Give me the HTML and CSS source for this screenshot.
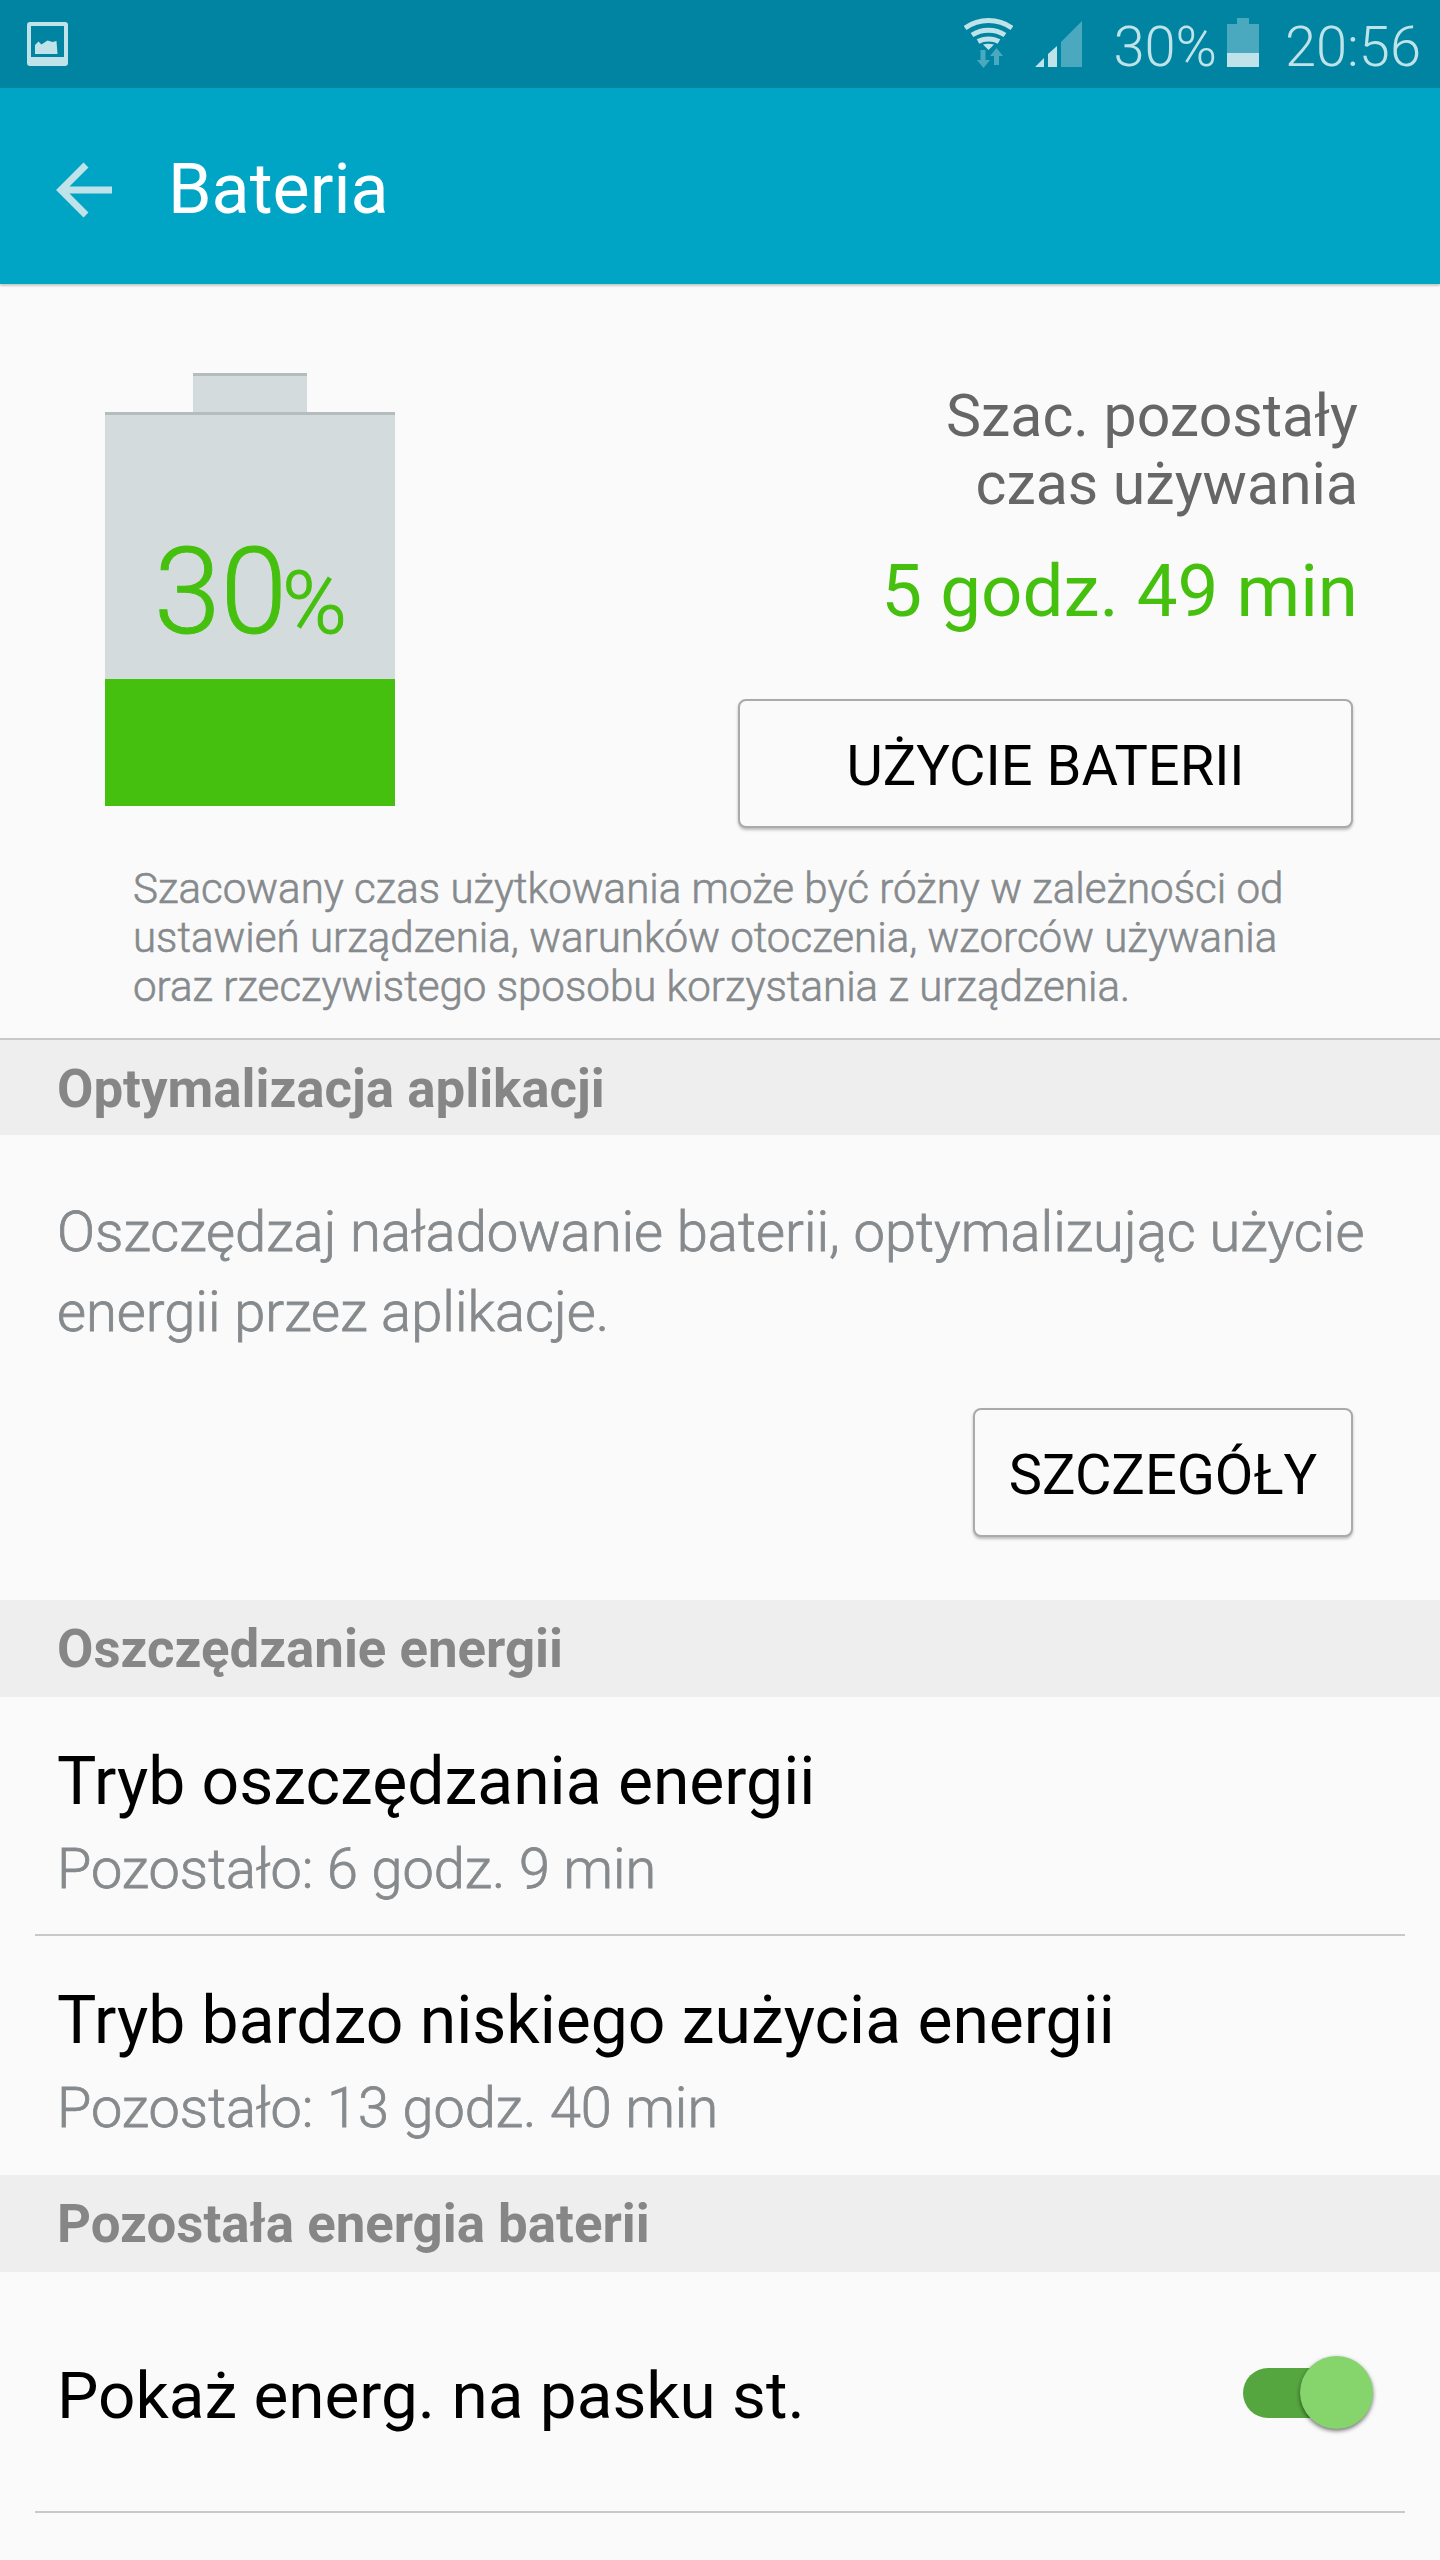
FILE: index.html
```html
<!DOCTYPE html>
<html lang="pl">
<head>
  <meta charset="UTF-8" />
  <title>Bateria</title>
  <link rel="stylesheet" href="styles.css">
</head>
<body>
  <div class="phone">
    <div class="status-bar">
      <svg class="status-photo" width="41" height="44" viewBox="0 0 41 44">
        <path fill="#bfe3e8" fill-rule="evenodd" d="M3 0h35a3 3 0 0 1 3 3v38a3 3 0 0 1-3 3H3a3 3 0 0 1-3-3V3a3 3 0 0 1 3-3zM4 4v31h33V4zM8 32V23l3.500-3.500 3 3 6-4 5 1.500 4-1 1 13z"/>
      </svg>
      <div class="status-right">
        <svg class="status-wifi" width="49" height="51" viewBox="0 0 49 51">
          <path fill="none" stroke="#bfe3e8" stroke-width="5" d="M1 11c14-10 33-10 47 0M8 18c10-6.500 23-6.500 33 0M14 24.500c6-3.500 15-3.500 21 0"/>
          <path fill="#bfe3e8" d="M19 27.500c3-1 7-1 11 0l-5.500 5.500z"/>
          <path fill="#4ba9bf" d="M16.500 33h5v10H26l-6.500 8L13 43h3.500zM32.500 31l6.500 8h-4v9h-5v-9h-4z"/>
        </svg>
        <svg class="status-signal" width="47" height="46" viewBox="0 0 47 46">
          <path fill="#bfe3e8" d="M0 46 9 37v9zM13 46V33l9-8v21z"/>
          <path fill="#4ba9bf" d="M26 46V21L47 0v46z"/>
        </svg>
        <span class="status-pct">30%</span>
        <div class="status-batt">
          <div class="status-batt-nub"></div>
          <div class="status-batt-body"><div class="status-batt-fill"></div></div>
        </div>
        <span class="status-time">20:56</span>
      </div>
    </div>

    <div class="app-bar">
      <svg class="back-icon" width="56" height="56" viewBox="0 0 56 56">
        <path fill="none" stroke="#bfe3e8" stroke-width="7" d="M56 28H5M30 3 5 28l25 25"/>
      </svg>
      <span class="app-title">Bateria</span>
    </div>

    <div class="battery-panel">
      <div class="battery-top">
        <div class="battery-big">
          <div class="battery-nub"></div>
          <div class="battery-body">
            <div class="battery-level"><span class="battery-num">30</span><span class="battery-sign">%</span></div>
            <div class="battery-fill"></div>
          </div>
        </div>
        <div class="battery-info">
          <div class="info-label">Szac. pozostały<br>czas używania</div>
          <div class="info-time">5 godz. 49 min</div>
          <button class="outline-btn usage-btn">UŻYCIE BATERII</button>
        </div>
      </div>
      <p class="battery-note">Szacowany czas użytkowania może być różny w zależności od<br>ustawień urządzenia, warunków otoczenia, wzorców używania<br>oraz rzeczywistego sposobu korzystania z urządzenia.</p>
    </div>

    <div class="section-head with-line">Optymalizacja aplikacji</div>
    <div class="optimize">
      <p class="optimize-text">Oszczędzaj naładowanie baterii, optymalizując użycie<br>energii przez aplikacje.</p>
      <div class="optimize-actions"><button class="outline-btn details-btn">SZCZEGÓŁY</button></div>
    </div>

    <div class="section-head">Oszczędzanie energii</div>
    <div class="row row-line">
      <div class="row-title">Tryb oszczędzania energii</div>
      <div class="row-sub">Pozostało: 6 godz. 9 min</div>
    </div>
    <div class="row">
      <div class="row-title">Tryb bardzo niskiego zużycia energii</div>
      <div class="row-sub">Pozostało: 13 godz. 40 min</div>
    </div>

    <div class="section-head">Pozostała energia baterii</div>
    <div class="row row-line row-switch">
      <div class="row-title">Pokaż energ. na pasku st.</div>
      <div class="switch"><div class="switch-knob"></div></div>
    </div>
  </div>
</body>
</html>
```

FILE: styles.css
```css
* {
  box-sizing: border-box;
}
html, body {
  margin: 0;
  padding: 0;
}
body {
  font-family: Roboto, 'Noto Sans', sans-serif;
  background-color: #fafafa;
  color: #000;
}
.phone {
  width: 1440px;
  height: 2560px;
  overflow: hidden;
  background-color: #fafafa;
}

/* status bar */
.status-bar {
  height: 88px;
  background-color: #0084a1;
  display: flex;
  align-items: center;
  justify-content: space-between;
  padding: 0 19px 0 27px;
  color: #bfe3e8;
}
.status-right {
  display: flex;
  align-items: center;
}
.status-wifi {
  margin-right: 22px;
  margin-top: -3px;
}
.status-signal {
  margin-right: 31px;
}
.status-pct, .status-time {
  font-size: 56px;
  font-weight: 300;
  line-height: 88px;
  margin-top: 6px;
}
.status-batt {
  width: 32px;
  margin-left: 10px;
  margin-right: 26px;
  margin-top: -3px;
}
.status-batt-nub {
  width: 12px;
  height: 6px;
  margin: 0 auto;
  background-color: #4ba9bf;
}
.status-batt-body {
  height: 43px;
  background-color: #4ba9bf;
  display: flex;
  align-items: flex-end;
}
.status-batt-fill {
  width: 100%;
  height: 14px;
  background-color: #bfe3e8;
}

/* app bar */
.app-bar {
  height: 196px;
  background-color: #00a5c6;
  display: flex;
  align-items: center;
  padding-left: 56px;
  box-shadow: 0 2px 2px rgba(0, 0, 0, 0.2);
}
.back-icon {
  margin-right: 56px;
  margin-top: 8px;
}
.app-title {
  color: #fff;
  font-size: 70px;
  line-height: 190px;
  margin-top: 6px;
}

/* battery */
.battery-panel {
  height: 754px;
  padding-top: 89px;
}
.battery-top {
  display: flex;
  align-items: flex-start;
  justify-content: space-between;
  padding: 0 82px 0 105px;
}
.battery-big {
  width: 290px;
}
.battery-nub {
  width: 114px;
  height: 39px;
  margin: 0 auto;
  background-color: #d3dbdd;
  border-top: 3px solid #b5bcbe;
}
.battery-body {
  height: 394px;
  background-color: #d3dbdd;
  border-top: 3px solid #b5bcbe;
}
.battery-level {
  height: 264px;
  color: #46c00f;
  text-align: center;
  padding-top: 117px;
  padding-left: 1px;
  font-weight: 300;
  line-height: 120px;
  -webkit-text-stroke: 1px #46c00f;
}
.battery-num {
  font-size: 120px;
}
.battery-sign {
  font-size: 88px;
  margin-left: -5px;
}
.battery-fill {
  height: 127px;
  background-color: #46c00f;
}
.battery-info {
  text-align: right;
  display: flex;
  flex-direction: column;
  align-items: flex-end;
  padding-top: 9px;
}
.info-label {
  color: #666;
  font-size: 59px;
  line-height: 68px;
}
.info-time {
  color: #46c00f;
  font-size: 72.700px;
  line-height: 84px;
  margin-top: 32px;
}
.outline-btn {
  display: block;
  font-family: inherit;
  font-size: 56px;
  color: #000;
  background-color: #fafafa;
  border: 2px solid #aaa;
  border-radius: 8px;
  box-shadow: 0 2px 3px rgba(0, 0, 0, 0.25);
  height: 129px;
  padding: 5px 0 0;
}
.usage-btn {
  width: 615px;
  margin-top: 65px;
  margin-right: 5px;
}
.battery-note {
  margin: 36px 0 0 133px;
  color: #868a8d;
  font-size: 42.100px;
  font-weight: 300;
  line-height: 49px;
  -webkit-text-stroke: 0.6px #868a8d;
}

/* section headers */
.section-head {
  height: 97px;
  background-color: #eeeeee;
  color: #868686;
  font-size: 52.800px;
  font-weight: 700;
  line-height: 99px;
  padding-left: 57px;
}
.section-head.with-line {
  border-top: 2px solid #c8c8c8;
}

/* optimize */
.optimize {
  height: 465px;
  padding: 57px 87px 0 57px;
}
.optimize-text {
  margin: 0;
  color: #868a8d;
  font-size: 56.100px;
  font-weight: 300;
  line-height: 80px;
  white-space: nowrap;
  -webkit-text-stroke: 0.8px #868a8d;
}
.optimize-actions {
  display: flex;
  justify-content: flex-end;
  margin-top: 56px;
}
.details-btn {
  width: 380px;
}

/* list rows */
.row {
  height: 239px;
  padding: 41px 35px 0 57px;
}
.row-line {
  position: relative;
}
.row-line::after {
  content: "";
  position: absolute;
  left: 35px;
  right: 35px;
  bottom: 0;
  height: 2px;
  background-color: #c8c8c8;
}
.row-title {
  font-size: 66px;
  line-height: 88px;
}
.row-sub {
  color: #868a8d;
  font-size: 55.800px;
  font-weight: 300;
  line-height: 86px;
  -webkit-text-stroke: 0.8px #868a8d;
}
.row-switch {
  height: 241px;
  display: flex;
  align-items: center;
  justify-content: space-between;
  padding: 0 97px 0 57px;
}
.row-switch .row-title {
  font-size: 65.700px;
  margin-top: 6px;
}
.switch {
  position: relative;
  width: 100px;
  height: 50px;
  border-radius: 25px;
  background-color: #56a640;
}
.switch-knob {
  position: absolute;
  right: -30px;
  top: -12px;
  width: 73px;
  height: 73px;
  border-radius: 50%;
  background-color: #86d46c;
  box-shadow: 0 2px 4px rgba(0, 0, 0, 0.55);
}
```
